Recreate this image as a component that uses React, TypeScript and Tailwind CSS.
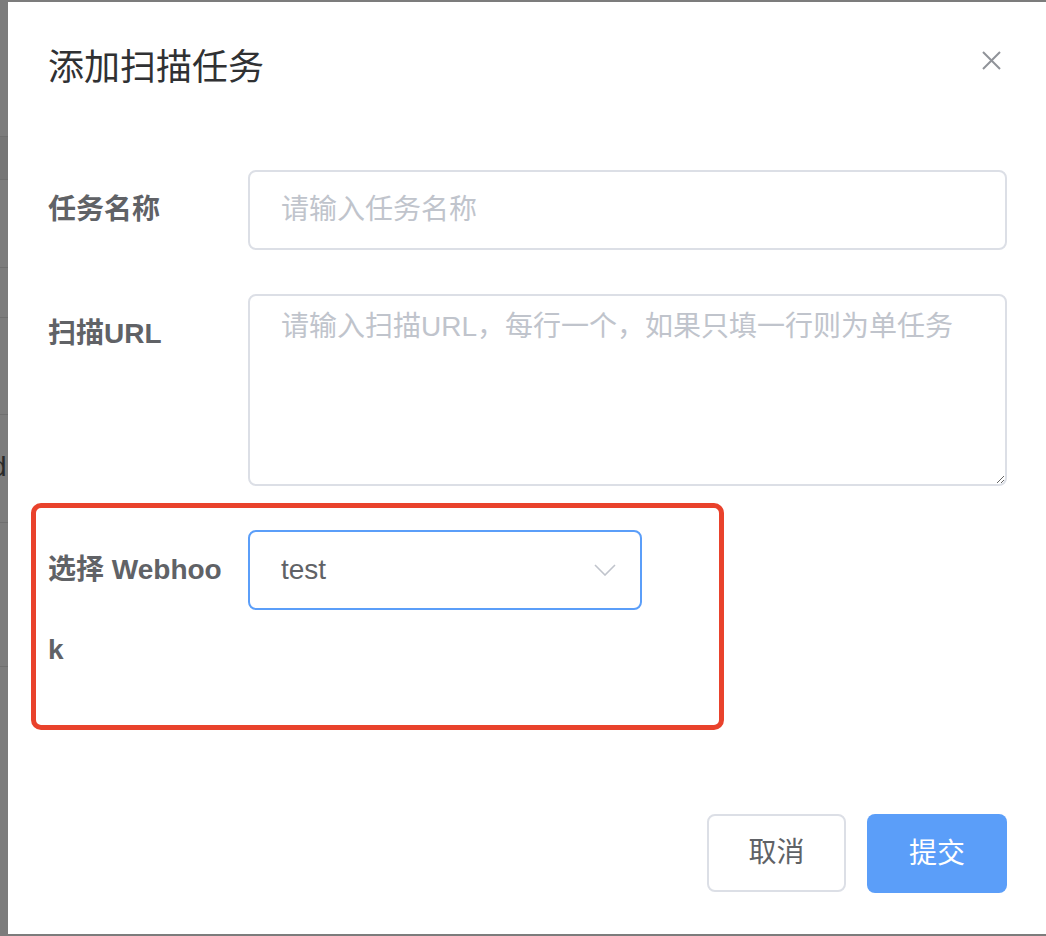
import React from 'react';

const font = { fontFamily: '"Liberation Sans", "Noto Sans CJK SC", sans-serif' };

const BackdropStrip = () => (
  <div className="w-[8px] shrink-0 flex flex-col bg-[#7c7c7c] overflow-hidden">
    <div className="h-[137px] border-b border-[#6f6f6f]" />
    <div className="h-[43px] bg-[#767676] border-b border-[#6f6f6f]" />
    <div className="h-[88px] border-b border-[#6f6f6f]" />
    <div className="h-[50px] border-b border-[#6f6f6f]" />
    <div className="h-[97px] border-b border-[#6f6f6f]" />
    <div className="h-[108px] border-b border-[#6f6f6f] relative">
      <span className="absolute left-[-9px] top-[38px] text-[28px] leading-none text-[#2a2a2a]">d</span>
    </div>
    <div className="h-[144px] border-b border-[#6f6f6f]" />
    <div className="flex-1" />
  </div>
);

const Label = ({ children }: { children: React.ReactNode }) => (
  <div className="w-[200px] shrink-0 pr-[22px] text-[28px] leading-[80px] font-bold text-[#606266] break-all">
    {children}
  </div>
);

export default function App() {
  return (
    <div className="relative flex h-[936px] w-[1046px] bg-[#7c7c7c] overflow-hidden" style={font}>
      <BackdropStrip />
      <div className="flex-1 mt-[2px] h-[932px] bg-white flex flex-col">
        {/* header */}
        <div className="relative pl-[40px] pr-[39px] pt-[42px] pb-[20px]">
          <div className="text-[36px] leading-[48px] text-[#303133]">添加扫描任务</div>
          <button className="absolute right-[45px] top-[49px] w-[19px] h-[19px]">
            <svg viewBox="0 0 19 19" className="w-[19px] h-[19px]" stroke="#909399" strokeWidth="2" fill="none">
              <path d="M1 1 L18 18 M18 1 L1 18" />
            </svg>
          </button>
        </div>

        {/* body */}
        <div className="pl-[40px] pr-[39px] pt-[58px] pb-[104px] flex flex-col gap-[44px]">
          <div className="flex">
            <Label>任务名称</Label>
            <div className="flex-1 h-[80px] border-2 border-[#dcdfe6] rounded-[8px] flex items-center pl-[31px] text-[28px] text-[#c0c4cc]">
              请输入任务名称
            </div>
          </div>

          <div className="flex">
            <Label>扫描URL</Label>
            <textarea
              className="flex-1 h-[192px] border-2 border-[#dcdfe6] rounded-[8px] px-[31px] py-[10px] text-[28px] leading-[42px] text-[#606266] placeholder:text-[#c0c4cc] outline-none"
              style={font}
              placeholder="请输入扫描URL，每行一个，如果只填一行则为单任务"
            />
          </div>

          <div className="flex">
            <Label>选择 Webhook</Label>
            <div className="w-[394px] h-[80px] border-2 border-[#5b9ef9] rounded-[8px] flex items-center justify-between pl-[31px] pr-[24px]">
              <span className="text-[28px] text-[#606266]">test</span>
              <svg viewBox="0 0 22 12" className="w-[22px] h-[12px]" stroke="#c0c4cc" strokeWidth="1.6" fill="none">
                <path d="M1 1 L11 11 L21 1" />
              </svg>
            </div>
          </div>
        </div>

        {/* footer */}
        <div className="flex justify-end gap-[21px] pl-[40px] pr-[39px] pt-[20px]">
          <button className="w-[139px] h-[78px] border-2 border-[#dcdfe6] rounded-[8px] bg-white text-[28px] text-[#606266]">
            取消
          </button>
          <button className="w-[140px] h-[79px] rounded-[8px] bg-[#5b9ef9] text-[28px] text-white">
            提交
          </button>
        </div>
      </div>

      {/* annotation box */}
      <div className="absolute left-[31px] top-[503px] w-[693px] h-[227px] border-[5px] border-[#e9422c] rounded-[10px] pointer-events-none" />
    </div>
  );
}
